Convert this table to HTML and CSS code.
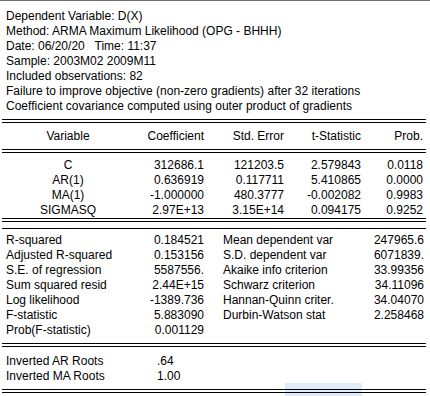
FILE: index.html
```html
<!DOCTYPE html>
<html lang="en">

<head>
    <meta charset="UTF-8">
    <meta name="viewport" content="width=device-width, initial-scale=1.0">
    <title>Equation: ARMA output</title>
    <link rel="stylesheet" href="styles.css">
</head>

<body>
    <div class="info">
        <div>Dependent Variable: D(X)</div>
        <div>Method: ARMA Maximum Likelihood (OPG - BHHH)</div>
        <div>Date: 06/20/20&nbsp;&nbsp; Time: 11:37</div>
        <div>Sample: 2003M02 2009M11</div>
        <div>Included observations: 82</div>
        <div>Failure to improve objective (non-zero gradients) after 32 iterations</div>
        <div>Coefficient covariance computed using outer product of gradients</div>
    </div>

    <div class="rule double first"></div>

    <div class="coef head">
        <span class="name">Variable</span>
        <span>Coefficient</span>
        <span>Std. Error</span>
        <span>t-Statistic</span>
        <span>Prob.</span>
    </div>

    <div class="rule double"></div>

    <div class="coef rows">
        <span class="name">C</span><span>312686.1</span><span>121203.5</span><span>2.579843</span><span>0.0118</span>
        <span class="name">AR(1)</span><span>0.636919</span><span>0.117711</span><span>5.410865</span><span>0.0000</span>
        <span class="name">MA(1)</span><span>-1.000000</span><span>480.3777</span><span>-0.002082</span><span>0.9983</span>
        <span class="name">SIGMASQ</span><span>2.97E+13</span><span>3.15E+14</span><span>0.094175</span><span>0.9252</span>
    </div>

    <div class="rule double tight"></div>
    <div class="rule single"></div>

    <div class="stats">
        <span>R-squared</span><span class="num">0.184521</span><span></span><span>Mean dependent var</span><span class="num">247965.6</span>
        <span>Adjusted R-squared</span><span class="num">0.153156</span><span></span><span>S.D. dependent var</span><span class="num">6071839.</span>
        <span>S.E. of regression</span><span class="num">5587556.</span><span></span><span>Akaike info criterion</span><span class="num">33.99356</span>
        <span>Sum squared resid</span><span class="num">2.44E+15</span><span></span><span>Schwarz criterion</span><span class="num">34.11096</span>
        <span>Log likelihood</span><span class="num">-1389.736</span><span></span><span>Hannan-Quinn criter.</span><span class="num">34.04070</span>
        <span>F-statistic</span><span class="num">5.883090</span><span></span><span>Durbin-Watson stat</span><span class="num">2.258468</span>
        <span>Prob(F-statistic)</span><span class="num">0.001129</span><span></span><span></span><span></span>
    </div>

    <div class="rule double roots-top"></div>

    <div class="roots">
        <span>Inverted AR Roots</span><span>.64</span>
        <span>Inverted MA Roots</span><span>1.00</span>
    </div>

    <div class="rule double last"></div>

    <!-- selected cell in the spreadsheet view -->
    <div class="selection"></div>
</body>

</html>
```

FILE: styles.css
```css
* {
    box-sizing: border-box;
    margin: 0;
    padding: 0;
}

html {
    background: #ffffff;
}

body {
    font-family: 'Liberation Sans', Arial, sans-serif;
    font-size: 12px;
    line-height: 15px;
    color: #000;
    border-top: 1px solid #6e6e6e;
    width: 430px;
    height: 396px;
    overflow: hidden;
}

.info {
    padding: 8px 0 0 6px;
    white-space: nowrap;
}

/* table rules */
.rule {
    margin: 0 4px 0 2px;
}

.rule.double {
    height: 4px;
    border-top: 1px solid #000;
    border-bottom: 1px solid #000;
}

.rule.single {
    height: 1px;
    background: #000;
    margin-top: 6px;
}

.rule.first {
    margin-top: 5px;
}

.rule.roots-top {
    margin-top: 5px;
}

.rule.last {
    margin-top: 5px;
}

/* coefficient table */
.coef {
    display: grid;
    grid-template-columns: 136px 68px 80px 77px 62px;
    text-align: right;
    white-space: nowrap;
}

.coef .name {
    text-align: center;
}

.coef.head {
    margin: 6px 0 5px;
}

.coef.rows {
    margin-top: 5px;
}

/* summary statistics */
.stats {
    display: grid;
    grid-template-columns: 130px 68px 19px 140px 61px;
    padding-left: 6px;
    margin-top: 4px;
    white-space: nowrap;
}

.stats .num {
    text-align: right;
}

.roots {
    display: grid;
    grid-template-columns: 151px auto;
    padding-left: 6px;
    margin-top: 7px;
    white-space: nowrap;
}

.selection {
    position: absolute;
    left: 285px;
    top: 383px;
    width: 77px;
    height: 13px;
    background: #dfeafb;
    z-index: -1;
}
```
